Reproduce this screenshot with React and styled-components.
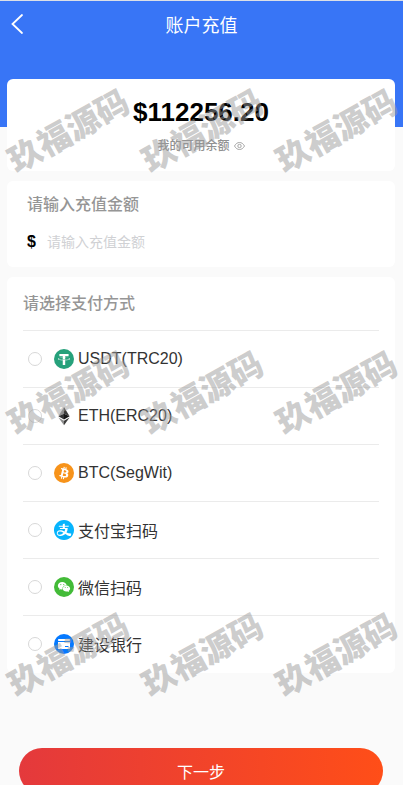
import React, { useState } from 'react'
import styled, { createGlobalStyle } from 'styled-components'
import { AiFillAlipayCircle, AiFillWechat } from 'react-icons/ai'

const GlobalStyle = createGlobalStyle`
  * {
    box-sizing: border-box;
  }
  html {
    scrollbar-width: none;
  }
  body {
    margin: 0;
    background-color: #fafafa;
    color: #333;
    font-family: 'Liberation Sans', 'Noto Sans CJK SC', sans-serif;
    font-size: 16px;
  }
  button,
  input {
    font-family: inherit;
  }
`

const Page = styled.div`
  position: relative;
  min-height: 100vh;
  overflow: hidden;
  border-top: 1px solid #dcdfe6;
`

const Header = styled.header`
  height: 126px;
  padding: 0 10px;
  background-color: #3875f6;
  color: #fff;
`

const NavBar = styled.div`
  display: grid;
  grid-template-columns: 16px 1fr 16px;
  align-items: center;
  height: 45px;

  h1 {
    margin: 0;
    font-size: 18px;
    font-weight: 400;
    text-align: center;
  }
`

const IconButton = styled.button`
  display: inline-flex;
  padding: 0;
  border: none;
  background: none;
  color: inherit;
  cursor: pointer;
`

const Content = styled.main`
  display: flex;
  flex-direction: column;
  gap: 10px;
  margin-top: -48px;
  padding: 0 8px 0 7px;
`

const Card = styled.section`
  border-radius: 6px;
  background-color: #fff;
`

const BalanceCard = styled(Card)`
  display: flex;
  flex-direction: column;
  align-items: center;
  gap: 13px;
  padding: 18px 16px 19px;
`

const Amount = styled.strong`
  color: #000;
  font-size: 26px;
  line-height: 30px;
`

const BalanceLabel = styled.div`
  display: flex;
  align-items: center;
  gap: 4px;
  color: #909090;
  font-size: 12px;
  font-weight: 500;
  line-height: 12px;
`

const AmountCard = styled(Card)`
  padding: 12px 20px;

  label {
    display: block;
    color: #969696;
    font-weight: 500;
    line-height: 24px;
  }
`

const AmountField = styled.div`
  display: flex;
  align-items: center;
  gap: 11px;
  margin-top: 12px;

  span {
    color: #000;
    font-weight: 700;
  }

  input {
    flex: 1 1 auto;
    min-width: 0;
    height: 26px;
    padding: 0;
    border: none;
    outline: none;
    background: none;
    font-size: 14px;
  }

  input::placeholder {
    color: #d0d1d4;
  }
`

const MethodsCard = styled(Card)`
  padding: 0 16px 1px;

  fieldset {
    min-width: 0;
    margin: 0;
    padding: 0;
    border: none;
  }

  legend {
    padding: 15px 0 14px;
    color: #969696;
    font-weight: 500;
    line-height: 24px;
  }
`

const Method = styled.label`
  display: flex;
  align-items: center;
  height: 57px;
  padding-left: 5px;
  border-top: 1px solid #ebebeb;
  cursor: pointer;

  svg {
    flex: 0 0 20px;
    margin: 0 4px 0 12px;
  }
`

const Radio = styled.input`
  appearance: none;
  width: 14px;
  height: 14px;
  margin: 0;
  border: 1px solid #d8d8d8;
  border-radius: 50%;

  &:checked {
    border: 4px solid #3875f6;
  }
`

const Footer = styled.footer`
  padding: 75px 20px 20px 19px;
`

const SubmitButton = styled.button`
  width: 100%;
  height: 46px;
  border: none;
  border-radius: 23px;
  background: linear-gradient(to right, #e4393c, #ff4e18);
  color: #fff;
  font-size: 16px;
  cursor: pointer;
`

const Watermark = styled.div`
  position: absolute;
  top: 0;
  left: 2px;
  display: grid;
  grid-template-columns: repeat(3, 134px);
  grid-auto-rows: 262px;
  place-items: center;
  color: rgba(155, 155, 155, 0.5);
  font-size: 33px;
  font-weight: 900;
  line-height: 32px;
  white-space: nowrap;
  pointer-events: none;

  span {
    transform: rotate(-29deg);
  }
`

const BackIcon = () => (
  <svg width="14" height="22" viewBox="0 0 14 22" fill="none" stroke="currentColor">
    <path d="M12 2 2.5 11 12 20" strokeWidth="1.8" strokeLinecap="round" />
  </svg>
)

const EyeIcon = () => (
  <svg width="11" height="10" viewBox="0 0 11 10" fill="none" stroke="currentColor" strokeWidth="0.8">
    <path d="M0.5 5C1.8 2.6 3.5 1.5 5.5 1.5S9.2 2.6 10.5 5C9.2 7.4 7.5 8.5 5.5 8.5S1.8 7.4 0.5 5Z" />
    <circle cx="5.5" cy="5" r="1.7" />
  </svg>
)

const TetherIcon = () => (
  <svg width="20" height="20" viewBox="0 0 32 32">
    <circle cx="16" cy="16" r="16" fill="#26a17b" />
    <path
      fill="#fff"
      d="M17.922 17.383v-.002c-.11.008-.677.042-1.942.042-1.01 0-1.721-.03-1.971-.042v.003c-3.888-.171-6.79-.848-6.79-1.658 0-.809 2.902-1.486 6.79-1.66v2.644c.254.018.982.061 1.988.061 1.207 0 1.812-.05 1.925-.06v-2.643c3.88.173 6.775.85 6.775 1.658 0 .81-2.895 1.485-6.775 1.657m0-3.59v-2.366h5.414V7.819H8.595v3.608h5.414v2.365c-4.4.202-7.709 1.074-7.709 2.118 0 1.044 3.309 1.915 7.709 2.118v7.582h3.913v-7.584c4.393-.202 7.694-1.073 7.694-2.116 0-1.043-3.301-1.914-7.694-2.117"
    />
  </svg>
)

const EthereumIcon = () => (
  <svg width="20" height="20" viewBox="0 0 20 20">
    <path fill="#8a8a8a" d="M10 1 4.4 10.3 10 7.8Z" />
    <path fill="#3c3c3b" d="M10 1 15.6 10.3 10 7.8Z" />
    <path fill="#343434" d="M4.4 10.3 10 7.8V13.6Z" />
    <path fill="#141414" d="M15.6 10.3 10 7.8V13.6Z" />
    <path fill="#8c8c8c" d="M4.4 11.4 10 14.7V19.2Z" />
    <path fill="#3c3c3b" d="M15.6 11.4 10 14.7V19.2Z" />
  </svg>
)

const BitcoinIcon = () => (
  <svg width="20" height="20" viewBox="0 0 32 32">
    <circle cx="16" cy="16" r="16" fill="#f7931a" />
    <path
      fill="#fff"
      d="M23.189 14.02c.314-2.096-1.283-3.223-3.465-3.975l.708-2.84-1.728-.43-.69 2.765c-.454-.114-.92-.22-1.385-.326l.695-2.783L15.596 6l-.708 2.839c-.376-.086-.746-.17-1.104-.26l.002-.009-2.384-.595-.46 1.846s1.283.294 1.256.312c.7.175.826.638.805 1.006l-.806 3.235c.048.012.11.03.18.057l-.183-.045-1.13 4.532c-.086.212-.303.531-.793.41.018.025-1.256-.313-1.256-.313l-.858 1.978 2.25.561c.418.105.828.215 1.231.318l-.715 2.872 1.727.43.708-2.84c.472.127.93.245 1.378.357l-.706 2.828 1.728.43.715-2.866c2.948.558 5.164.333 6.097-2.333.752-2.146-.037-3.385-1.588-4.192 1.13-.26 1.98-1.003 2.207-2.538zm-3.95 5.538c-.533 2.147-4.148.986-5.32.695l.95-3.805c1.172.293 4.929.872 4.37 3.11zm.535-5.569c-.487 1.953-3.495.96-4.47.717l.86-3.45c.975.243 4.118.696 3.61 2.733z"
    />
  </svg>
)

const AlipayIcon = () => (
  <svg width="20" height="20" viewBox="0 0 20 20">
    <AiFillAlipayCircle x="-1.43" y="-1.43" size="22.86" color="#06b4fd" />
  </svg>
)

const WechatIcon = () => (
  <svg width="20" height="20" viewBox="0 0 20 20">
    <circle cx="10" cy="10" r="10" fill="#43bb38" />
    <AiFillWechat x="3" y="3" size="14" color="#fff" />
  </svg>
)

const BankCardIcon = () => (
  <svg width="20" height="20" viewBox="0 0 20 20">
    <circle cx="10" cy="10" r="10" fill="#0579ff" />
    <rect x="4" y="5" width="12" height="2" rx="0.8" fill="#fff" />
    <path fill="#fff" d="M4 8H16V14.2A0.8 0.8 0 0 1 15.2 15H4.800A0.8 0.8 0 0 1 4 14.2Z" />
    <rect x="11" y="12" width="3.5" height="1" fill="#0579ff" />
  </svg>
)

const methods = [
  { id: 'usdt', label: 'USDT(TRC20)', Icon: TetherIcon },
  { id: 'eth', label: 'ETH(ERC20)', Icon: EthereumIcon },
  { id: 'btc', label: 'BTC(SegWit)', Icon: BitcoinIcon },
  { id: 'alipay', label: '支付宝扫码', Icon: AlipayIcon },
  { id: 'wechat', label: '微信扫码', Icon: WechatIcon },
  { id: 'ccb', label: '建设银行', Icon: BankCardIcon },
]

const App = () => {
  const [amount, setAmount] = useState('')
  const [method, setMethod] = useState(null)
  const [visible, setVisible] = useState(true)

  return (
    <Page>
      <GlobalStyle />
      <Header>
        <NavBar>
          <IconButton type="button" aria-label="返回">
            <BackIcon />
          </IconButton>
          <h1>账户充值</h1>
        </NavBar>
      </Header>
      <Content>
        <BalanceCard>
          <Amount>{visible ? '$112256.20' : '******'}</Amount>
          <BalanceLabel>
            我的可用余额
            <IconButton type="button" aria-label="显示余额" onClick={() => setVisible(!visible)}>
              <EyeIcon />
            </IconButton>
          </BalanceLabel>
        </BalanceCard>
        <AmountCard>
          <label htmlFor="amount">请输入充值金额</label>
          <AmountField>
            <span>$</span>
            <input
              id="amount"
              type="text"
              inputMode="decimal"
              placeholder="请输入充值金额"
              value={amount}
              onChange={e => setAmount(e.target.value)}
            />
          </AmountField>
        </AmountCard>
        <MethodsCard>
          <fieldset>
            <legend>请选择支付方式</legend>
            {methods.map(({ id, label, Icon }) => (
              <Method key={id}>
                <Radio
                  type="radio"
                  name="method"
                  value={id}
                  checked={method === id}
                  onChange={() => setMethod(id)}
                />
                <Icon />
                {label}
              </Method>
            ))}
          </fieldset>
        </MethodsCard>
      </Content>
      <Footer>
        <SubmitButton type="button">下一步</SubmitButton>
      </Footer>
      <Watermark aria-hidden="true">
        {Array.from({ length: 9 }, (_, i) => (
          <span key={i}>玖福源码</span>
        ))}
      </Watermark>
    </Page>
  )
}

export default App
